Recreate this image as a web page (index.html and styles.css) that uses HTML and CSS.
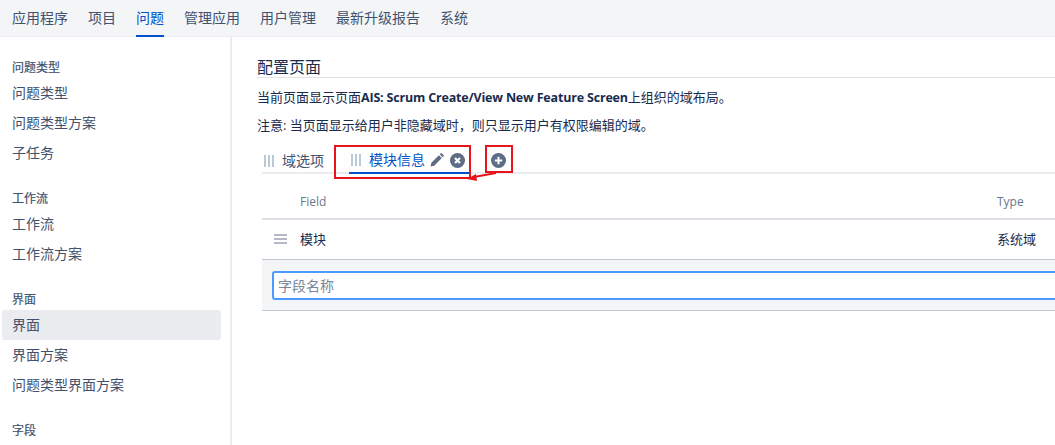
FILE: index.html

```html
<html>
  <head>
    <title>配置页面</title>
    <link rel="stylesheet" href="styles.css">
  </head>
  <body>
    <div class="topnav">
      <a>应用程序</a>
      <a>项目</a>
      <a class="active">问题</a>
      <a>管理应用</a>
      <a>用户管理</a>
      <a>最新升级报告</a>
      <a>系统</a>
    </div>
    <div class="page">
      <div class="sidebar">
        <div class="group">
          <h4>问题类型</h4>
          <a>问题类型</a>
          <a>问题类型方案</a>
          <a>子任务</a>
        </div>
        <div class="group">
          <h4>工作流</h4>
          <a>工作流</a>
          <a>工作流方案</a>
        </div>
        <div class="group">
          <h4>界面</h4>
          <a class="current">界面</a>
          <a>界面方案</a>
          <a>问题类型界面方案</a>
        </div>
        <div class="group">
          <h4>字段</h4>
        </div>
      </div>
      <div class="main">
        <h2>配置页面</h2>
        <p class="first">当前页面显示页面<b>AIS: Scrum Create/View New Feature Screen</b>上组织的域布局。</p>
        <p>注意: 当页面显示给用户非隐藏域时，则只显示用户有权限编辑的域。</p>
        <div class="tabs">
          <div class="tab">
            <span class="grip"><i></i><i></i><i></i></span>
            <span>域选项</span>
          </div>
          <div class="tab selected">
            <span class="grip"><i></i><i></i><i></i></span>
            <span>模块信息</span>
            <svg class="ico pencil" width="14" height="14" viewBox="0 0 14 14"><path d="M0.5 13.5l0.8-3.7 7.6-7.6 2.9 2.9-7.6 7.6zM9.8 1.3l1-1q0.5-0.4 1 0l1.9 1.9q0.4 0.5 0 1l-1 1z" fill="#5e6c84"/></svg>
            <svg class="ico" width="15" height="15" viewBox="0 0 15 15"><circle cx="7.5" cy="7.5" r="7.5" fill="#5e6c84"/><path d="M5 5l5 5M10 5l-5 5" stroke="#fff" stroke-width="2.2"/></svg>
          </div>
          <svg class="ico add" width="15" height="15" viewBox="0 0 15 15"><circle cx="7.5" cy="7.5" r="7.5" fill="#5e6c84"/><path d="M7.5 3.8v7.4M3.8 7.5h7.4" stroke="#fff" stroke-width="2"/></svg>
        </div>
        <div class="fields">
          <div class="row head">
            <div class="name">Field</div>
            <div class="type">Type</div>
          </div>
          <div class="row item">
            <span class="handle"><i></i><i></i><i></i></span>
            <div class="name">模块</div>
            <div class="type">系统域</div>
          </div>
          <div class="addrow">
            <input class="fieldinput" placeholder="字段名称">
          </div>
        </div>
      </div>
    </div>
    <!-- red annotations drawn on top of the screenshot -->
    <div class="mark mark-tab"></div>
    <div class="mark mark-add"></div>
    <svg class="arrow" width="40" height="16" viewBox="0 0 40 16">
      <path d="M30 2L8 6" stroke="#e8141c" stroke-width="2" fill="none"/>
      <path d="M1 8l9-5 1 7z" fill="#e8141c"/>
    </svg>
  </body>
</html>
```

FILE: styles.css

```css
* {box-sizing: border-box;}
html, body {margin: 0; height: 100%; overflow: hidden;}
body {background: #fff; color: #172b4d; font-family: "Open Sans", "Noto Sans CJK SC", sans-serif; font-size: 14px; position: relative;}

.topnav {display: flex; gap: 20px; height: 37px; padding-left: 12px; background: #f4f5f7; border-bottom: 1px solid #ebecf0;}
.topnav a {height: 37px; line-height: 36px; color: #42526e;}
.topnav a.active {color: #0052cc; border-bottom: 2px solid #0052cc;}

.page {display: flex; height: 408px;}

.sidebar {width: 232px; flex: none; padding: 21px 9px 0 2px; border-right: 2px solid #ebecf0; overflow: hidden;}
.group {margin-bottom: 21px;}
.group h4 {margin: 0; padding-left: 10px; height: 20px; line-height: 20px; font-size: 12px; font-weight: 400; color: #42526e; -webkit-text-stroke: 0.2px #42526e;}
.group a {display: block; height: 30px; line-height: 30px; padding-left: 10px; color: #42526e; border-radius: 3px;}
.group a.current {background: #ebecf0;}

.main {flex: 1; min-width: 0; padding: 20px 0 0 25px; overflow: hidden;}
.main h2 {margin: 0; height: 21px; line-height: 21px; font-size: 16px; font-weight: 400; color: #172b4d; border-bottom: 1px solid #dfe1e6; width: 900px;}
.main p {margin: 0; height: 28px; line-height: 28px; font-size: 13px; white-space: nowrap;}
.main p.first {margin-top: 5px;}
.main p b {font-size: 12.5px; letter-spacing: -0.18px;}

.tabs {display: flex; align-items: flex-start; margin-left: 5px; margin-top: 7px; height: 28px; border-bottom: 2px solid #ebecf0; width: 900px;}
.tab {display: flex; align-items: center; height: 28px; padding: 0 2px; color: #42526e;}
.tab .grip {margin-right: 8px; margin-top: 2px;}
.tab.selected {margin-left: 23px; padding-left: 2px; width: 120px; color: #0052cc; border-bottom: 2px solid #0052cc; margin-right: 21px;}
.grip {display: inline-flex; gap: 2px;}
.grip i {display: block; width: 2px; height: 12px; background: #b9cbd9;}
.ico {flex: none; margin-top: 2px;}
.pencil {margin-left: 5px;}
.pencil + .ico {margin-left: 6px;}
.add {margin-top: 7px; margin-left: 1px;}

.fields {margin-left: 5px; width: 900px;}
.row {display: flex; align-items: center; position: relative;}
.row .name {margin-left: 38px; width: 697px;}
.row.head {height: 46px; padding-top: 10px; border-bottom: 2px solid #dfe1e6; font-size: 12px; color: #6b778c; font-weight: 500;}
.row.item {height: 40px; padding-bottom: 2px; border-bottom: 1px solid #c1c7d0;}
.row.item .name, .row.item .type {font-size: 13px;}
.row.item .name {margin-left: 13px;}
.handle {display: flex; flex-direction: column; gap: 2px; margin-left: 12px;}
.handle i {display: block; width: 13px; height: 2px; background: #b3bac5;}
.addrow {height: 51px; padding: 11px 0 0 10px; background: #f4f5f7; border-bottom: 1px solid #c1c7d0;}
.fieldinput {display: block; width: 100%; height: 29px; padding: 0 4px; border: 2px solid #4c9aff; border-radius: 3px; background: #fff; font: inherit; outline: none;}
.fieldinput::placeholder {color: #7a869a;}

.mark {position: absolute; border: 2px solid #e8141c;}
.mark-tab {left: 334px; top: 145px; width: 137px; height: 34px;}
.mark-add {left: 485px; top: 145px; width: 28px; height: 28px;}
.arrow {position: absolute; left: 466px; top: 171px;}
```
